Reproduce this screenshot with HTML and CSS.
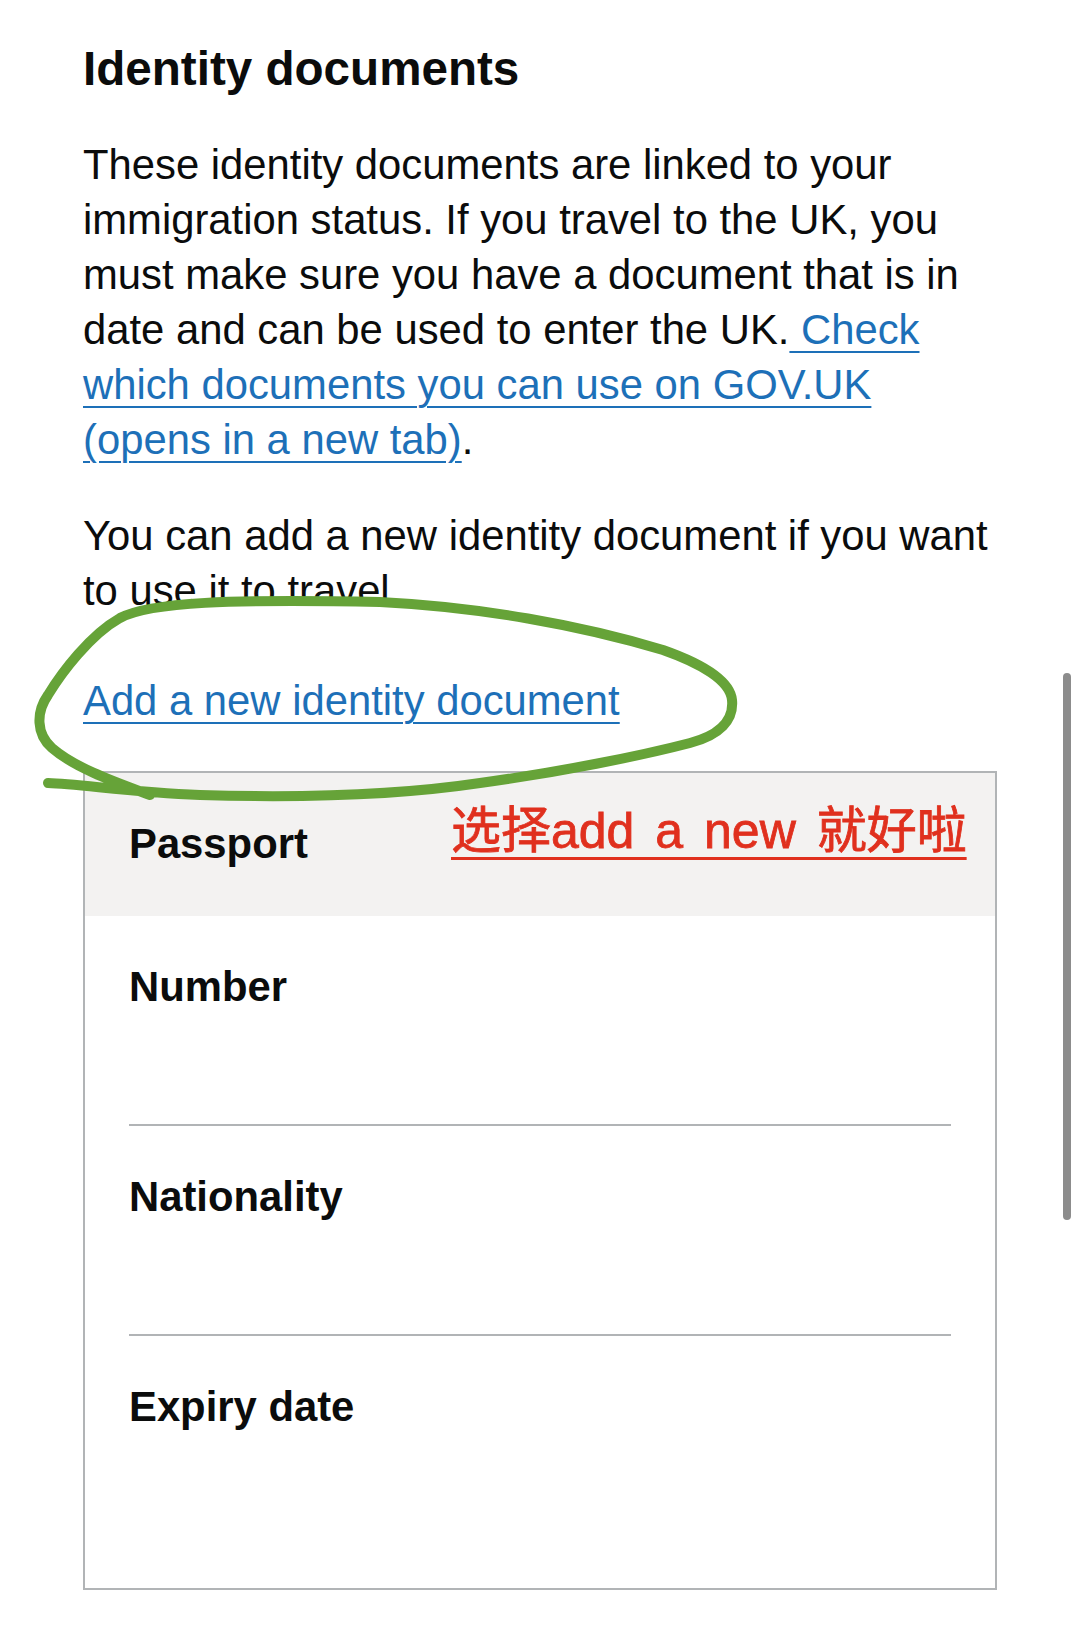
FILE: index.html
```html
<!DOCTYPE html>
<html lang="en">
<head>
  <meta charset="UTF-8" />
  <meta name="viewport" content="width=device-width, initial-scale=1.0" />
  <title>Identity documents</title>
  <link rel="stylesheet" href="styles.css">
</head>
<body>
  <main class="page">
    <h1 class="heading">Identity documents</h1>

    <p class="body">These identity documents are linked to your immigration status. If you travel to the UK, you must make sure you have a document that is in date and can be used to enter the UK.<a class="link" href="#"> Check which documents you can use on GOV.UK (opens in a new tab)</a>.</p>

    <p class="body">You can add a new identity document if you want to use it to travel.</p>

    <p class="body add-link"><a class="link" href="#">Add a new identity document</a></p>

    <section class="card">
      <h2 class="card-title">Passport</h2>
      <span class="note">选择add a new 就好啦</span>
      <dl class="summary">
        <div class="row">
          <dt class="key">Number</dt>
          <dd class="value"></dd>
        </div>
        <div class="row">
          <dt class="key">Nationality</dt>
          <dd class="value"></dd>
        </div>
        <div class="row">
          <dt class="key">Expiry date</dt>
          <dd class="value"></dd>
        </div>
      </dl>
    </section>
  </main>

  <!-- hand drawn marker round the link -->
  <svg class="marker" viewBox="0 0 1080 1629" width="1080" height="1629">
    <path d="M150,795 C115,782 75,768 52,748 C36,734 36,712 48,695 C62,672 90,635 120,618 C150,602 230,599 380,602 C480,607 580,625 663,650 C700,663 730,680 732,700 C734,720 720,735 690,743 C640,756 560,772 480,783 C400,795 300,798 200,795 C130,792 80,784 48,783" />
  </svg>

  <div class="scrollbar"></div>
</body>
</html>
```

FILE: styles.css
```css
body {
  margin: 0;
  background: #ffffff;
  color: #0b0c0c;
  font-family: "Liberation Sans", Arial, sans-serif;
}

.page {
  padding: 41px 83px 40px;
}

.heading {
  margin: 0 0 41px;
  font-size: 47.6px;
  line-height: 55px;
  font-weight: bold;
}

.body {
  margin: 0 0 41px;
  font-size: 41.8px;
  line-height: 55px;
}

.add-link {
  margin-top: 55px;
  margin-bottom: 43px;
}

.link {
  color: #1d70b8;
  text-decoration: underline;
  text-decoration-thickness: 2px;
  text-underline-offset: 7px;
}

.card {
  position: relative;
  border: 2px solid #b1b4b6;
}

.card-title {
  margin: 0;
  padding: 43px 44px 45px;
  background: #f3f2f1;
  font-size: 41.8px;
  line-height: 55px;
  font-weight: bold;
}

.note {
  position: absolute;
  top: 33px;
  left: 366px;
  color: #e0301e;
  font-family: "Liberation Sans", "Noto Sans CJK SC", sans-serif;
  font-size: 50px;
  line-height: 50px;
  word-spacing: 7px;
  -webkit-text-stroke: 0.8px #e0301e;
  text-decoration: underline;
  text-decoration-thickness: 3px;
  text-underline-offset: 9px;
  text-decoration-skip-ink: none;
}

.summary {
  margin: 0;
  padding: 0 44px 44px;
}

.row {
  padding: 43px 0 55px;
  border-bottom: 2px solid #b1b4b6;
}

.row:last-child {
  border-bottom: none;
}

.key {
  font-size: 41.8px;
  line-height: 55px;
  font-weight: bold;
}

.value {
  margin: 0;
  min-height: 55px;
}

.marker {
  position: absolute;
  top: 0;
  left: 0;
  pointer-events: none;
}

.marker path {
  fill: none;
  stroke: #66a338;
  stroke-width: 10;
  stroke-linecap: round;
  stroke-linejoin: round;
}

.scrollbar {
  position: absolute;
  top: 673px;
  left: 1063px;
  width: 8px;
  height: 547px;
  border-radius: 4px;
  background: #8c8c8c;
}
```
